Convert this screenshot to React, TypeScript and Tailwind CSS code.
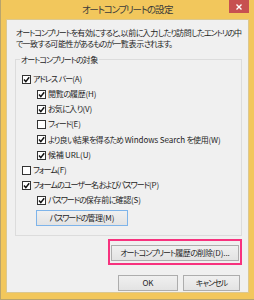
import React from 'react';

const font = "font-['Noto_Sans_CJK_JP',sans-serif] [font-feature-settings:'palt']";

// Meiryo UI has narrow kana, so kana / kanji / latin runs get their own spacing
function T({ s }: { s: string }) {
  const parts = s.match(/[\x20-\x7e]+|[\u3001-\u30ff]+|[^\x20-\x7e\u3001-\u30ff]+/g) ?? [];
  return (
    <>
      {parts.map((p, i) => {
        if (/^[\x20-\x7e]/.test(p))
          return (
            <span key={i} className="tracking-[-0.01em]">
              {p}
            </span>
          );
        if (/^[\u3001-\u30ff]/.test(p))
          return (
            <span key={i} className="tracking-[-0.125em]">
              {p}
            </span>
          );
        return (
          <span key={i} className="tracking-[-0.04em]">
            {p}
          </span>
        );
      })}
    </>
  );
}

function Check({ checked }: { checked: boolean }) {
  return (
    <span className="w-[9px] h-[9px] shrink-0 border border-[#333] bg-white flex items-center justify-center">
      {checked && (
        <svg width="7" height="7" viewBox="0 0 7 7" fill="none">
          <path d="M1 3.6 L2.8 5.6 L6.2 1.2" stroke="#111" strokeWidth="1.5" />
        </svg>
      )}
    </span>
  );
}

function Row({ label, checked, indent }: { label: string; checked: boolean; indent?: boolean }) {
  return (
    <div className={`h-[15.2px] flex items-center gap-[2px] ${indent ? 'pl-[21px]' : 'pl-[6px]'}`}>
      <Check checked={checked} />
      <span className="whitespace-nowrap">
        <T s={label} />
      </span>
    </div>
  );
}

function Button({ label, className }: { label: string; className?: string }) {
  return (
    <button
      className={`h-[16px] flex items-center justify-center border bg-gradient-to-b from-[#f0f0f0] to-[#e3e3e3] text-[8px] leading-none text-[#1e1e1e] whitespace-nowrap ${className ?? ''}`}
    >
      <T s={label} />
    </button>
  );
}

export default function App() {
  return (
    <div className={`w-[254px] h-[300px] bg-[#f2c75c] border-l border-b border-[#b9a46c] flex flex-col ${font}`}>
      <div className="relative h-[19px] flex items-center justify-center">
        <span className="text-[9.5px] text-[#3a3a3a] leading-none">
          <T s="オートコンプリートの設定" />
        </span>
        <span className="absolute right-[5px] top-0 w-[20px] h-[13px] bg-[#c75050] flex items-center justify-center">
          <svg width="6" height="6" viewBox="0 0 6 6">
            <path d="M0.5 0.5 L5.5 5.5 M5.5 0.5 L0.5 5.5" stroke="#fff" strokeWidth="1.4" />
          </svg>
        </span>
      </div>

      <div className="mx-[5px] h-[274px] bg-[#f0f0f0] border border-[#dcc88f] flex flex-col text-[8px] leading-[10.5px] text-[#1e1e1e]">
        <p className="pt-[8px] pl-[9px] whitespace-nowrap">
          <T s="オートコンプリートを有効にすると、以前に入力したり訪問したエントリの中" />
          <br />
          <T s="で一致する可能性があるものが一覧表示されます。" />
        </p>

        <fieldset className="mt-[5px] ml-[8px] mr-[6px] border border-[#dcdcdc] pt-[6.5px] pb-[9px]">
          <legend className="ml-[4px] px-[1px] leading-[11px]">
            <T s="オートコンプリートの対象" />
          </legend>
          <Row label="アドレス バー(A)" checked />
          <Row label="閲覧の履歴(H)" checked indent />
          <Row label="お気に入り(V)" checked indent />
          <Row label="フィード(E)" checked={false} indent />
          <Row label="より良い結果を得るため Windows Search を使用(W)" checked indent />
          <Row label="候補 URL(U)" checked indent />
          <Row label="フォーム(F)" checked={false} />
          <Row label="フォームのユーザー名およびパスワード(P)" checked />
          <Row label="パスワードの保存前に確認(S)" checked indent />
          <div className="pl-[20px] mt-[2px]">
            <Button label="パスワードの管理(M)" className="w-[92px] border-[#7eb4ea]" />
          </div>
        </fieldset>

        <div className="mt-[3px] mr-[6px] flex justify-end">
          <div className="w-[134px] border-2 border-[#f7327e] px-[1px] pt-[4px] pb-[2px]">
            <Button label="オートコンプリート履歴の削除(D)..." className="w-full border-[#adadad]" />
          </div>
        </div>

        <div className="mt-[10px] mr-[8px] flex justify-end gap-[5px]">
          <Button label="OK" className="w-[60px] border-[#adadad]" />
          <Button label="キャンセル" className="w-[57px] border-[#adadad]" />
        </div>
      </div>
    </div>
  );
}
